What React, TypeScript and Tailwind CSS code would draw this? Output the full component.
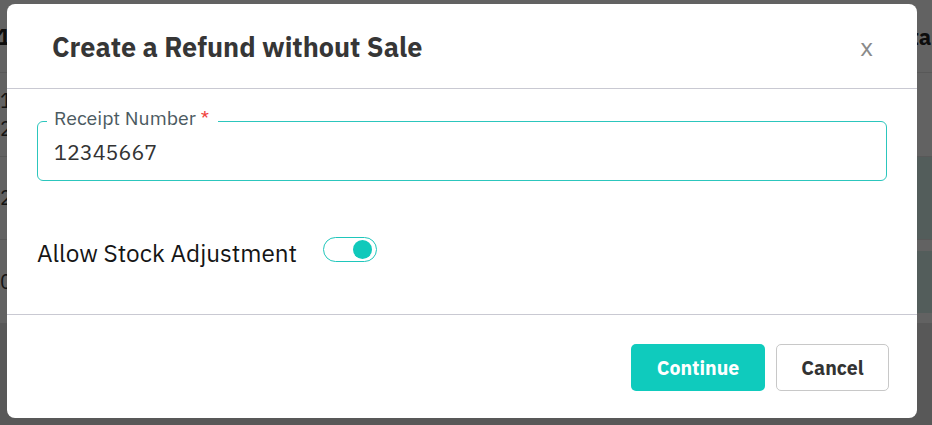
import React from "react";

const font = { fontFamily: '"IBM Plex Sans", "Noto Sans", "Open Sans", sans-serif' };

function BackgroundTable() {
  return (
    <div className="w-[932px] h-[425px] bg-[#f4f4f4] flex flex-col" style={font}>
      <div className="h-[73px] border-b border-[#dcdcdc] flex items-center justify-between px-0 text-[22px] font-bold text-[#222]">
        <span className="-ml-[3px]">1</span>
        <span className="mr-[-6px]">Total</span>
      </div>
      <div className="h-[84px] border-b border-[#dcdcdc] flex flex-col justify-center text-[20px] text-[#333] leading-[28px]">
        <span>1</span>
        <span>2</span>
      </div>
      <div className="h-[83px] border-b border-[#dcdcdc] flex items-center text-[20px] text-[#333] bg-[#f4f4f4]">
        <span className="flex-1">2</span>
        <span className="w-[30px] h-full bg-[#cfe9e4]" />
      </div>
      <div className="h-[83px] flex items-center text-[20px] text-[#333]">
        <span className="flex-1">0</span>
        <span className="w-[30px] h-[62px] bg-[#cfe9e4]" />
      </div>
      <div className="flex-1 bg-[#dddddd]" />
    </div>
  );
}

function Toggle() {
  return (
    <div className="w-[54px] h-[25px] rounded-full border-[1.5px] border-[#1fc6bb] bg-white flex items-center justify-end pr-[4px]">
      <div className="w-[19px] h-[19px] rounded-full bg-[#10c9bb]" />
    </div>
  );
}

export default function App() {
  return (
    <div className="relative w-[932px] h-[425px] overflow-hidden">
      <BackgroundTable />
      <div className="absolute inset-0 bg-[rgba(0,0,0,0.6)] pl-[7px] pt-[4px]" style={font}>
        <div className="w-[910px] h-[414px] bg-white rounded-[8px] flex flex-col">
          <div className="h-[85px] border-b border-[#c9c9d2] flex items-center justify-between pl-[45px] pr-[44px]">
            <h2 className="text-[27px] font-bold text-[#363636] leading-none">Create a Refund without Sale</h2>
            <span className="text-[25px] text-[#8a8a8a] leading-none">x</span>
          </div>
          <div className="h-[226px] border-b border-[#c9c9d2] px-[30px] pt-[32px] flex flex-col">
            <div className="relative h-[60px] rounded-[6px] border border-[#2cc6bd] flex items-center pl-[16px]">
              <span className="absolute -top-[17px] left-[9px] bg-white pl-[7px] pr-[9px] text-[19.5px] text-[#4b5a61] leading-[26px]">
                Receipt Number <span className="text-[#f0443f]">*</span>
              </span>
              <span className="text-[21.5px] text-[#333] mt-[3px]">12345667</span>
            </div>
            <div className="mt-[53px] flex items-center gap-[26px]">
              <span className="text-[24.3px] text-[#151515] leading-none mt-[7px]">Allow Stock Adjustment</span>
              <Toggle />
            </div>
          </div>
          <div className="flex-1 flex items-start justify-end gap-[11px] pr-[28px] pt-[29px]">
            <button className="w-[134px] h-[47px] rounded-[5px] bg-[#0fcbbd] text-white text-[19.5px] font-bold">Continue</button>
            <button className="w-[113px] h-[47px] rounded-[5px] border border-[#c8c8c8] bg-white text-[#333] text-[19.5px] font-bold">Cancel</button>
          </div>
        </div>
      </div>
    </div>
  );
}
